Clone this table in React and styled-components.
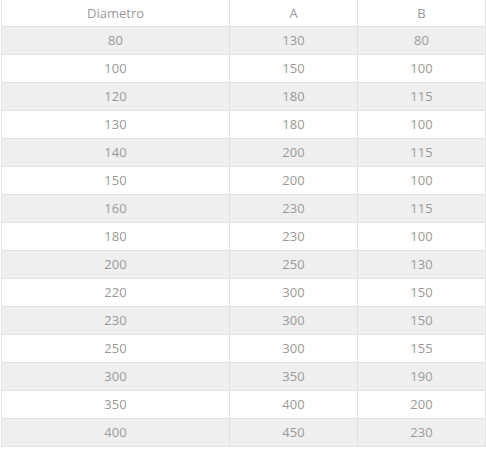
import React from "react";
import styled, { createGlobalStyle } from "styled-components";

const Global = createGlobalStyle`
  html, body { margin: 0; padding: 0; background: #fff; }
  body { font-family: "Open Sans", "Liberation Sans", sans-serif; }
`;

const Wrap = styled.div`
  padding: 0 0 0 1px;
`;

const Table = styled.table`
  border-collapse: collapse;
  table-layout: fixed;
  width: 484px;
  font-size: 13px;
  color: #9a9a9a;
`;

const Col = styled.col`
  width: ${(p) => p.$w}px;
`;

const Row = styled.tr`
  background: ${(p) => (p.$striped ? "#efefef" : "#ffffff")};
`;

const HeadCell = styled.th`
  font-weight: 400;
  height: 26px;
  padding: 0;
  text-align: center;
  border: 1px solid #e2e2e2;
  border-top: none;
  line-height: 26px;
`;

const Cell = styled.td`
  height: 27px;
  padding: 0;
  text-align: center;
  border: 1px solid #e2e2e2;
  line-height: 27px;
`;

const rows = [
  [80, 130, 80],
  [100, 150, 100],
  [120, 180, 115],
  [130, 180, 100],
  [140, 200, 115],
  [150, 200, 100],
  [160, 230, 115],
  [180, 230, 100],
  [200, 250, 130],
  [220, 300, 150],
  [230, 300, 150],
  [250, 300, 155],
  [300, 350, 190],
  [350, 400, 200],
  [400, 450, 230],
];

export default function App() {
  return (
    <>
      <Global />
      <Wrap>
        <Table>
          <colgroup>
            <Col $w={228} />
            <Col $w={128} />
            <Col $w={128} />
          </colgroup>
          <thead>
            <Row>
              <HeadCell>Diametro</HeadCell>
              <HeadCell>A</HeadCell>
              <HeadCell>B</HeadCell>
            </Row>
          </thead>
          <tbody>
            {rows.map((r, i) => (
              <Row key={i} $striped={i % 2 === 0}>
                {r.map((v, j) => (
                  <Cell key={j}>{v}</Cell>
                ))}
              </Row>
            ))}
          </tbody>
        </Table>
      </Wrap>
    </>
  );
}
